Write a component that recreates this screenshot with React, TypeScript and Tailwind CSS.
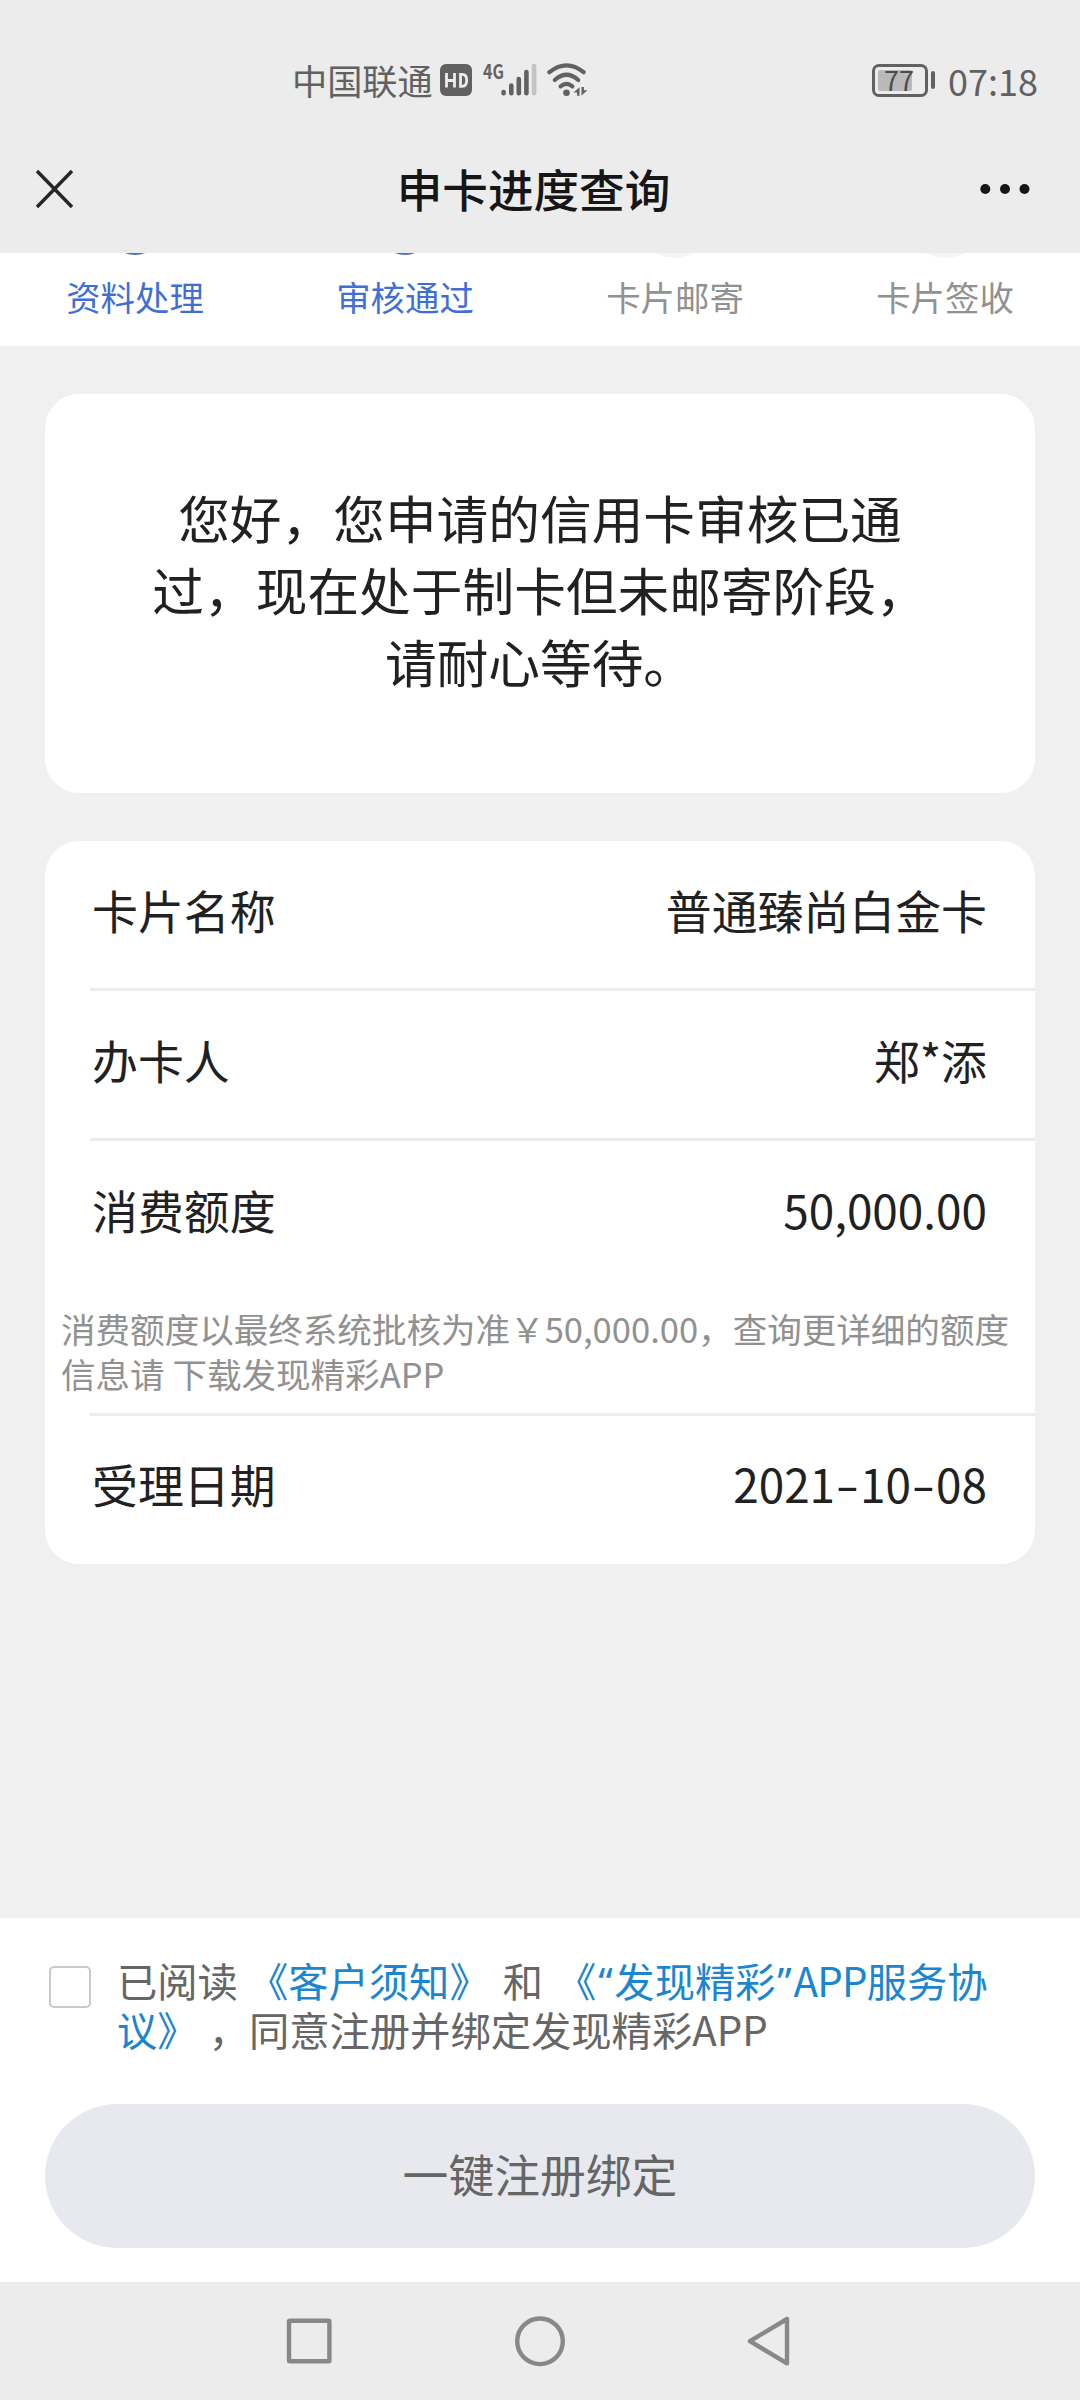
interface Step {
    label: string;
    done: boolean;
}

const steps: Step[] = [
    { label: '资料处理', done: true },
    { label: '审核通过', done: true },
    { label: '卡片邮寄', done: false },
    { label: '卡片签收', done: false },
];

function HdIcon() {
    return (
        <svg width="32" height="32" viewBox="0 0 32 32">
            <rect width="32" height="32" rx="6" fill="#616161" />
            <path
                d="M6.5 9v14.5M14.5 9v14.5M6.5 16.5h8M20.5 10.3v12h1.8q4.4 0 4.4-6t-4.4-6z"
                fill="none"
                stroke="#ececec"
                strokeWidth="2.8"
            />
        </svg>
    );
}

function SignalIcon() {
    return (
        <svg width="36" height="34" viewBox="0 0 36 34" fill="none" strokeWidth="4.6" strokeLinecap="round">
            <path d="M2.6 29v1.2M10.3 22.5v7.7M17.8 16v14.2M25.4 9v21.2" stroke="#616161" />
            <path d="M33.1 3v27.2" stroke="#c4c4c4" />
        </svg>
    );
}

function WifiIcon() {
    return (
        <svg width="42" height="34" viewBox="0 0 42 34" fill="none">
            <g stroke="#616161" strokeWidth="4.2" strokeLinecap="round">
                <path d="M2.4 9.2Q19.5 -4.6 36.6 9.2" />
                <path d="M7.8 17Q19.5 6.6 31.2 17" />
                <path d="M13.6 23.4Q19.5 18.4 25.4 23.4" />
            </g>
            <circle cx="19.5" cy="29.7" r="3.3" fill="#616161" />
            <path d="M26.5 29.5l6-5.2v8.5h-2.4v-3.3zM40.5 27.3l-6 5.2V24h2.4v3.3z" fill="#616161" />
        </svg>
    );
}

function Battery({ level }: { level: number }) {
    return (
        <div className="flex items-center gap-[3px]">
            <div className="relative h-[33px] w-[56px] rounded-[7px] border-[3px] border-[#616161] p-[3px]">
                <div className="h-full rounded-[2px] bg-[#b9b9b9]" style={{ width: `${level}%` }} />
                <span className="absolute inset-0 flex items-center justify-center pr-[2px] pb-[2px] text-[27px] leading-none text-[#4c4c4c]">
                    {level}
                </span>
            </div>
            <div className="h-[18px] w-[4px] rounded-[2px] bg-[#616161]" />
        </div>
    );
}

function StatusBar() {
    return (
        <div className="flex h-[127px] items-start justify-between pt-[63px] pr-[42px] pl-[292px] text-[#616161]">
            <div className="flex h-[34px] items-center">
                <span className="pb-[1px] text-[35.2px] leading-[34px]">中国联通</span>
                <div className="ml-[7px]">
                    <HdIcon />
                </div>
                <span className="ml-[11px] w-[18px] origin-left scale-x-[0.82] self-start text-[19.5px] leading-[15px] font-bold">
                    4G
                </span>
                <SignalIcon />
                <div className="ml-[10px]">
                    <WifiIcon />
                </div>
            </div>
            <div className="flex h-[34px] items-center">
                <Battery level={77} />
                <span className="ml-[13px] pb-[1px] text-[36px] leading-[34px]">07:18</span>
            </div>
        </div>
    );
}

function TitleBar() {
    return (
        <div className="flex h-[126px] items-center justify-between pr-[50px] pl-[35px]">
            <svg width="40" height="40" viewBox="0 0 40 40" className="-mt-[2px]">
                <path d="M2 2l35 36M37 2L2 38" stroke="#262626" strokeWidth="3.4" />
            </svg>
            <h1 className="ml-[12px] pb-[3px] text-[45.6px] leading-none font-medium text-[#161616]">申卡进度查询</h1>
            <svg width="50" height="10" viewBox="0 0 50 10" fill="#161616" className="-mt-[2px]">
                <circle cx="5.3" cy="5" r="5" />
                <circle cx="25" cy="5" r="5" />
                <circle cx="44.5" cy="5" r="5" />
            </svg>
        </div>
    );
}

function StepBar() {
    return (
        <div className="grid h-[93px] grid-cols-4 bg-white">
            {steps.map((step) => (
                <div key={step.label} className="flex flex-col items-center">
                    {/* bottom edge of the step icon, the rest is scrolled away */}
                    <svg width="60" height="7" viewBox="0 0 60 7">
                        {step.done ? (
                            <circle cx="30" cy="-24.5" r="26.5" fill="#4a74bd" />
                        ) : (
                            <circle cx="30" cy="-38" r="43" fill="#f5f5f5" />
                        )}
                    </svg>
                    <span
                        className={`mt-[18px] text-[34.4px] leading-[36px] ${step.done ? 'text-[#3f6fd6]' : 'text-[#919191]'}`}
                    >
                        {step.label}
                    </span>
                </div>
            ))}
        </div>
    );
}

function Row({ label, children }: { label: string; children: React.ReactNode }) {
    return (
        <div className="flex h-[147px] items-center justify-between pr-[48px] pb-[10px] pl-[47px] text-[45.9px] leading-none text-[#212121]">
            <span>{label}</span>
            <span>{children}</span>
        </div>
    );
}

function Divider() {
    return <div className="ml-[45px] h-[3px] bg-[#ebebeb]" />;
}

function Dash() {
    return <span className="inline-block w-[25px] -translate-y-[1px] scale-x-[1.5] text-center">-</span>;
}

function Agreement() {
    return (
        <div className="flex pt-[37px] pl-[49px]">
            <div className="mt-[11px] h-[42px] w-[42px] rounded-[5px] border-2 border-[#c9c9c9] bg-white" />
            <p className="ml-[26px] text-[40.3px] leading-[49px] whitespace-nowrap text-[#666666]">
                已阅读 <span className="ml-[1px] text-[#1b86cf]">《客户须知》</span>{' '}
                <span className="mx-[4px]">和</span>{' '}
                <span className="text-[#1b86cf]">
                    《<span className="inline-block w-[18px] text-center font-['Noto_Sans'] leading-none">“</span>
                    发现精彩
                    <span className="inline-block w-[18px] text-center font-['Noto_Sans'] leading-none">”</span>
                    <span className="tracking-[-0.8px]">APP</span>服务协
                    <br />
                    议》
                </span>{' '}
                <span className="ml-[2px]">，同意注册并绑定发现精彩APP</span>
            </p>
        </div>
    );
}

function NavBar() {
    return (
        <div className="flex h-[118px] items-center justify-center bg-[#ececec] pb-[1px]">
            <svg width="510" height="52" viewBox="0 0 510 52" fill="none" stroke="#888888" strokeWidth="4.4" strokeLinejoin="round">
                <rect x="4" y="5.7" width="40.4" height="40.6" rx="1" />
                <circle cx="255" cy="26.3" r="22.8" />
                <path d="M502 4v44.4L465 26.2z" />
            </svg>
        </div>
    );
}

export default function App() {
    return (
        <div
            lang="zh-CN"
            className="flex h-[2400px] w-[1080px] flex-col overflow-hidden bg-[#f0f0f0] font-['Noto_Sans_CJK_SC',sans-serif] [text-spacing-trim:space-all]"
        >
            <header className="h-[253px] bg-[#ececec]">
                <StatusBar />
                <TitleBar />
            </header>
            <StepBar />

            <main className="flex flex-1 flex-col gap-[48px] px-[45px] pt-[48px]">
                <section className="h-[399px] rounded-[34px] bg-white pt-[87px] text-center text-[51.7px] leading-[72px] text-[#212121]">
                    您好，您申请的信用卡审核已通
                    <br />
                    过，现在处于制卡但未邮寄阶段，
                    <br />
                    请耐心等待。
                </section>

                <section className="h-[723px] rounded-[34px] bg-white">
                    <Row label="卡片名称">普通臻尚白金卡</Row>
                    <Divider />
                    <Row label="办卡人">郑*添</Row>
                    <Divider />
                    <Row label="消费额度">50,000.00</Row>
                    <p className="h-[125px] pt-[18px] pl-[16px] text-[34.55px] leading-[45px] whitespace-nowrap text-[#919191]">
                        消费额度以最终系统批核为准￥50,000.00，查询更详细的额度
                        <br />
                        信息请 下载发现精彩APP
                    </p>
                    <Divider />
                    <div className="-mt-[1px]">
                        <Row label="受理日期">
                            2021
                            <Dash />
                            10
                            <Dash />
                            08
                        </Row>
                    </div>
                </section>
            </main>

            <footer className="h-[364px] bg-white">
                <Agreement />
                <div className="px-[45px] pt-[51px]">
                    <button className="h-[144px] w-full rounded-full bg-[#e8e9ee] pb-[5px] text-[45.8px] leading-none text-[#666666]">
                        一键注册绑定
                    </button>
                </div>
            </footer>
            <NavBar />
        </div>
    );
}
